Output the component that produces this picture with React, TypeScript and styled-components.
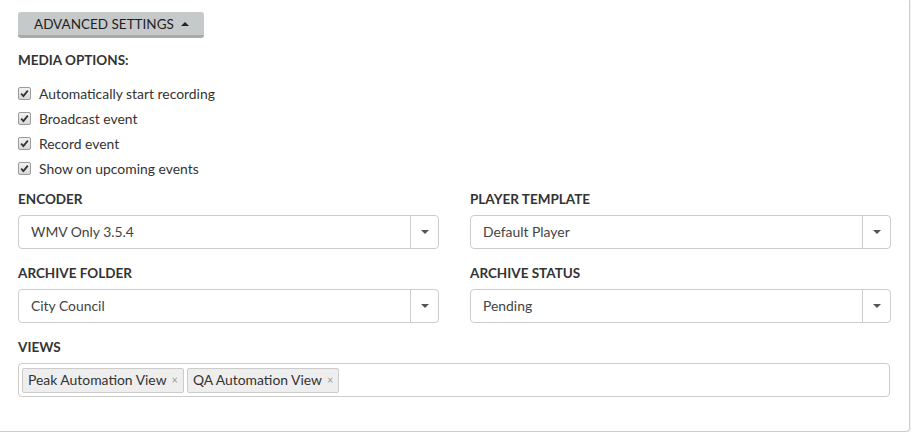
import React from "react";
import styled, { createGlobalStyle } from "styled-components";

const GlobalStyle = createGlobalStyle`
  html, body { margin: 0; padding: 0; background: #fff; }
  body { font-family: "Lato", "Liberation Sans", sans-serif; font-size: 13.9px; color: #333; }
  * { box-sizing: border-box; }
`;

const Panel = styled.div`
  width: 910px;
  padding: 12px 18px 34px 18px;
  border-right: 1px solid #ccc;
  border-bottom: 1px solid #ccc;
  border-bottom-right-radius: 4px;
  box-shadow: 1px 1px 1px rgba(0,0,0,0.06);
`;

const ToggleButton = styled.button`
  display: inline-flex;
  align-items: center;
  gap: 7px;
  height: 26px;
  width: 186px;
  padding: 0 0 0 16px;
  border: none;
  border-bottom: 3px solid #a7aaaa;
  border-radius: 3px;
  background: #c6c9c9;
  font-family: inherit;
  font-size: 13.5px;
  color: #1e1e1e;
  text-transform: uppercase;
  cursor: pointer;
`;

const Caret = styled.span<{ $up?: boolean }>`
  display: inline-block;
  width: 0;
  height: 0;
  border-left: 4px solid transparent;
  border-right: 4px solid transparent;
  ${(p) => (p.$up ? "border-bottom: 4px solid #222;" : "border-top: 4px solid #555;")}
`;

const SectionTitle = styled.div`
  margin-top: 13px;
  line-height: 18px;
  font-size: 13.5px;
  font-weight: 700;
  text-transform: uppercase;
  color: #333;
`;

const CheckList = styled.div`
  margin-top: 12px;
  display: flex;
  flex-direction: column;
`;

const CheckRow = styled.label`
  display: flex;
  align-items: center;
  gap: 8px;
  height: 25px;
  color: #333;
`;

const CheckBox = styled.span`
  width: 13px;
  height: 13px;
  border: 1px solid #9a9a9a;
  border-radius: 2px;
  background: linear-gradient(#f2f2f2, #d8d8d8);
  display: flex;
  align-items: center;
  justify-content: center;
`;

const FieldGrid = styled.div`
  margin-top: 9px;
  display: grid;
  grid-template-columns: 1fr 1fr;
  column-gap: 31px;
  row-gap: 15px;
`;

const Field = styled.div<{ $wide?: boolean }>`
  display: flex;
  flex-direction: column;
  gap: 7px;
  ${(p) => (p.$wide ? "grid-column: 1 / -1; padding-right: 1px;" : "")}
`;

const FieldLabel = styled.div`
  line-height: 18px;
  font-size: 13.5px;
  font-weight: 700;
  text-transform: uppercase;
  color: #333;
`;

const Select = styled.div`
  height: 34px;
  display: flex;
  border: 1px solid #ccc;
  border-radius: 4px;
  background: #fff;
`;

const SelectValue = styled.div`
  flex: 1;
  display: flex;
  align-items: center;
  padding: 0 0 1px 12px;
  color: #444;
`;

const SelectArrow = styled.div`
  width: 28px;
  border-left: 1px solid #ccc;
  display: flex;
  align-items: center;
  justify-content: center;
`;

const MultiBox = styled.div`
  height: 34px;
  display: flex;
  align-items: center;
  gap: 3px;
  padding: 0 3px;
  border: 1px solid #ccc;
  border-radius: 4px;
  background: #fff;
`;

const Tag = styled.span`
  height: 25px;
  display: inline-flex;
  align-items: center;
  gap: 5px;
  padding: 0 5px 1px 5px;
  border: 1px solid #ccc;
  border-radius: 2px;
  background: #eee;
  color: #333;
`;

const TagRemove = styled.span`
  font-size: 11px;
  color: #999;
`;

const Check = () => (
  <CheckBox>
    <svg width="9" height="9" viewBox="0 0 9 9">
      <path d="M1.2 4.6 L3.4 7 L7.8 1.6" stroke="#333" strokeWidth="1.8" fill="none" />
    </svg>
  </CheckBox>
);

const Dropdown = ({ value }: { value: string }) => (
  <Select>
    <SelectValue>{value}</SelectValue>
    <SelectArrow>
      <Caret />
    </SelectArrow>
  </Select>
);

const options = [
  "Automatically start recording",
  "Broadcast event",
  "Record event",
  "Show on upcoming events",
];

export default function App() {
  return (
    <>
      <GlobalStyle />
      <Panel>
        <ToggleButton>
          Advanced Settings <Caret $up />
        </ToggleButton>
        <SectionTitle>Media Options:</SectionTitle>
        <CheckList>
          {options.map((o) => (
            <CheckRow key={o}>
              <Check />
              {o}
            </CheckRow>
          ))}
        </CheckList>
        <FieldGrid>
          <Field>
            <FieldLabel>Encoder</FieldLabel>
            <Dropdown value="WMV Only 3.5.4" />
          </Field>
          <Field>
            <FieldLabel>Player Template</FieldLabel>
            <Dropdown value="Default Player" />
          </Field>
          <Field>
            <FieldLabel>Archive Folder</FieldLabel>
            <Dropdown value="City Council" />
          </Field>
          <Field>
            <FieldLabel>Archive Status</FieldLabel>
            <Dropdown value="Pending" />
          </Field>
          <Field $wide>
            <FieldLabel>Views</FieldLabel>
            <MultiBox>
              <Tag>
                Peak Automation View <TagRemove>×</TagRemove>
              </Tag>
              <Tag>
                QA Automation View <TagRemove>×</TagRemove>
              </Tag>
            </MultiBox>
          </Field>
        </FieldGrid>
      </Panel>
    </>
  );
}
